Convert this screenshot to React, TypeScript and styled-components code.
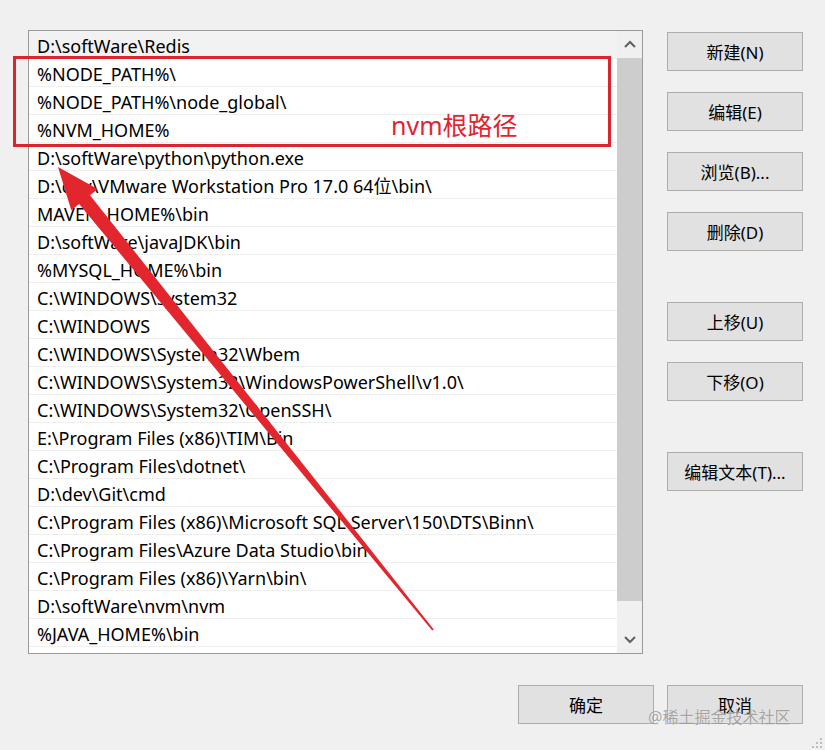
import { createGlobalStyle, styled } from "styled-components";

const GlobalStyle = createGlobalStyle`
  html, body {
    margin: 0;
    padding: 0;
    background: #f0f0f0;
    overflow: hidden;
  }
  * {
    box-sizing: border-box;
  }
`;

const FONT = `"Noto Sans", "Noto Sans CJK SC", sans-serif`;

const PATHS = [
  "D:\\softWare\\Redis",
  "%NODE_PATH%\\",
  "%NODE_PATH%\\node_global\\",
  "%NVM_HOME%",
  "D:\\softWare\\python\\python.exe",
  "D:\\dev\\VMware Workstation Pro 17.0 64位\\bin\\",
  "MAVEN_HOME%\\bin",
  "D:\\softWare\\javaJDK\\bin",
  "%MYSQL_HOME%\\bin",
  "C:\\WINDOWS\\system32",
  "C:\\WINDOWS",
  "C:\\WINDOWS\\System32\\Wbem",
  "C:\\WINDOWS\\System32\\WindowsPowerShell\\v1.0\\",
  "C:\\WINDOWS\\System32\\OpenSSH\\",
  "E:\\Program Files (x86)\\TIM\\Bin",
  "C:\\Program Files\\dotnet\\",
  "D:\\dev\\Git\\cmd",
  "C:\\Program Files (x86)\\Microsoft SQL Server\\150\\DTS\\Binn\\",
  "C:\\Program Files\\Azure Data Studio\\bin",
  "C:\\Program Files (x86)\\Yarn\\bin\\",
  "D:\\softWare\\nvm\\nvm",
  "%JAVA_HOME%\\bin",
];

const SIDE_BUTTONS: { label: string; spaced?: boolean }[] = [
  { label: "新建(N)" },
  { label: "编辑(E)" },
  { label: "浏览(B)..." },
  { label: "删除(D)" },
  { label: "上移(U)", spaced: true },
  { label: "下移(O)" },
  { label: "编辑文本(T)...", spaced: true },
];

const Dialog = styled.div`
  position: relative;
  width: 825px;
  height: 750px;
  padding: 30px 22px 0 28px;
  display: flex;
  flex-direction: column;
  font-family: ${FONT};
  color: #000;
`;

const TopArea = styled.div`
  display: flex;
  gap: 24px;
`;

const ListBox = styled.div`
  width: 615px;
  height: 624px;
  border: 1px solid #9a9a9a;
  background: #fff;
  display: flex;
`;

const Rows = styled.div`
  flex: 1;
  display: flex;
  flex-direction: column;
`;

const Row = styled.div<{ $hover?: boolean }>`
  height: 28px;
  line-height: 30px;
  padding-left: 8px;
  font-size: 18px;
  white-space: nowrap;
  overflow: hidden;
  border-bottom: 1px solid #efefef;
  background: ${({ $hover }) => ($hover ? "#f2f2f2" : "#fff")};
`;

const ScrollBar = styled.div`
  width: 25px;
  background: #f0f0f0;
  display: flex;
  flex-direction: column;
`;

const ScrollArrow = styled.div`
  height: 26px;
  display: flex;
  align-items: center;
  justify-content: center;
`;

const Thumb = styled.div`
  margin-top: 1px;
  height: 543px;
  background: #cdcdcd;
`;

const Track = styled.div`
  flex: 1;
`;

const SideColumn = styled.div`
  display: flex;
  flex-direction: column;
  padding-top: 2px;
  gap: 21px;
`;

const DialogButton = styled.div<{ $spaced?: boolean }>`
  width: 136px;
  height: 39px;
  border: 1px solid #adadad;
  background: #e1e1e1;
  display: flex;
  align-items: center;
  justify-content: center;
  font-size: 17px;
  color: #000;
  margin-top: ${({ $spaced }) => ($spaced ? "30px" : "0")};
`;

const BottomBar = styled.div`
  display: flex;
  justify-content: flex-end;
  gap: 13px;
  margin-top: 31px;
`;

const Highlight = styled.div`
  position: absolute;
  left: 13px;
  top: 56px;
  width: 598px;
  height: 91px;
  border: 3px solid #dc2430;
  pointer-events: none;
`;

const Note = styled.div`
  position: absolute;
  left: 391px;
  top: 109px;
  font-size: 25px;
  line-height: 32px;
  color: #e1252f;
`;

const Watermark = styled.div`
  position: absolute;
  left: 648px;
  top: 706px;
  font-size: 16px;
  line-height: 22px;
  color: rgba(110, 110, 110, 0.62);
  text-shadow: 0 0 1px rgba(255, 255, 255, 0.8);
`;

const Overlay = styled.svg`
  position: absolute;
  left: 0;
  top: 0;
  pointer-events: none;
`;

function Chevron({ up }: { up?: boolean }) {
  return (
    <svg width="12" height="8" viewBox="0 0 12 8">
      <path
        d={up ? "M1 7 L6 2 L11 7" : "M1 1 L6 6 L11 1"}
        fill="none"
        stroke="#606060"
        strokeWidth="2"
      />
    </svg>
  );
}

export default function App() {
  return (
    <>
      <GlobalStyle />
      <Dialog>
        <TopArea>
          <ListBox>
            <Rows>
              {PATHS.map((p, i) => (
                <Row key={i} $hover={i === 0}>
                  {p}
                </Row>
              ))}
            </Rows>
            <ScrollBar>
              <ScrollArrow>
                <Chevron up />
              </ScrollArrow>
              <Thumb />
              <Track />
              <ScrollArrow>
                <Chevron />
              </ScrollArrow>
            </ScrollBar>
          </ListBox>
          <SideColumn>
            {SIDE_BUTTONS.map((b) => (
              <DialogButton key={b.label} $spaced={b.spaced}>
                {b.label}
              </DialogButton>
            ))}
          </SideColumn>
        </TopArea>
        <BottomBar>
          <DialogButton>确定</DialogButton>
          <DialogButton>取消</DialogButton>
        </BottomBar>

        <Highlight />
        <Note>nvm根路径</Note>
        <Watermark>@稀土掘金技术社区</Watermark>
        <Overlay width="825" height="750" viewBox="0 0 825 750">
          <polygon
            points="58,167 97.7,188.9 90,195.2 433.8,629.4 432.2,630.6 79.1,204 71.3,210.3"
            fill="#e3262e"
          />
          <g fill="#bdbdbd">
            <rect x="820" y="738" width="2" height="2" />
            <rect x="816" y="742" width="2" height="2" />
            <rect x="820" y="742" width="2" height="2" />
            <rect x="812" y="746" width="2" height="2" />
            <rect x="816" y="746" width="2" height="2" />
            <rect x="820" y="746" width="2" height="2" />
          </g>
        </Overlay>
      </Dialog>
    </>
  );
}
